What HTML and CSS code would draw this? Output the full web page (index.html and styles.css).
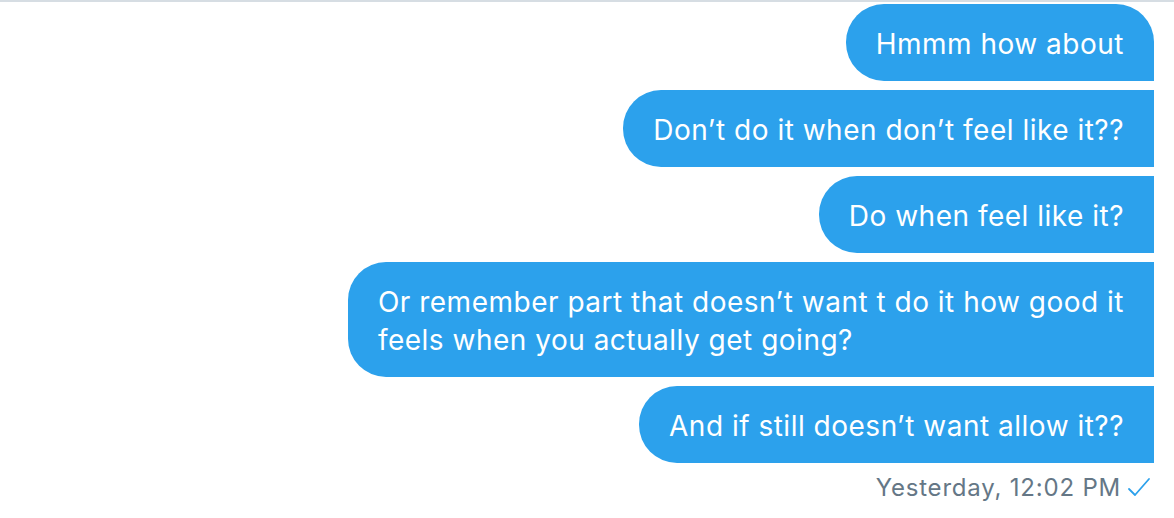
FILE: index.html
```html
<!DOCTYPE html>
<html lang="en">
<head>
    <meta charset="UTF-8">
    <meta name="viewport" content="width=device-width, initial-scale=1.0">
    <title>Messages</title>
    <link rel="stylesheet" href="styles.css">
</head>
<body>

<div class="conversation">
    <div class="message-group">
        <div class="bubble first">Hmmm how about</div>
        <div class="bubble">Don’t do it when don’t feel like it??</div>
        <div class="bubble">Do when feel like it?</div>
        <div class="bubble">Or remember part that doesn’t want t do it how good it<br>feels when you actually get going?</div>
        <div class="bubble">And if still doesn’t want allow it??</div>
    </div>
    <div class="meta">
        <span class="time">Yesterday, 12:02 PM</span>
        <svg class="check" width="24" height="22" viewBox="0 0 24 22">
            <path d="M2 12 L8 18 L22 2" fill="none" stroke="#2ca1ec" stroke-width="1.8" stroke-linecap="round" stroke-linejoin="round"/>
        </svg>
    </div>
</div>

</body>
</html>
```

FILE: styles.css
```css
body {
    margin: 0;
    background-color: #fff;
    font-family: Inter, 'Liberation Sans', sans-serif;
}
.conversation {
    border-top: 2px solid #d6dde3;
    padding: 2px 20px 0 20px;
}
.message-group {
    display: flex;
    flex-direction: column;
    align-items: flex-end;
    gap: 9px;
}
.bubble {
    background-color: #2ca1ec;
    color: #fff;
    font-size: 28px;
    letter-spacing: 0.5px;
    line-height: 38px;
    padding: 21px 30px 18px 30px;
    border-radius: 38px 0 0 38px;
}
.bubble.first {
    border-radius: 38px 38px 0 38px;
}
.meta {
    display: flex;
    justify-content: flex-end;
    align-items: center;
    gap: 6px;
    margin-top: 10px;
    padding-right: 3px;
}
.time {
    color: #657786;
    font-size: 24px;
    letter-spacing: 0.8px;
}
```
